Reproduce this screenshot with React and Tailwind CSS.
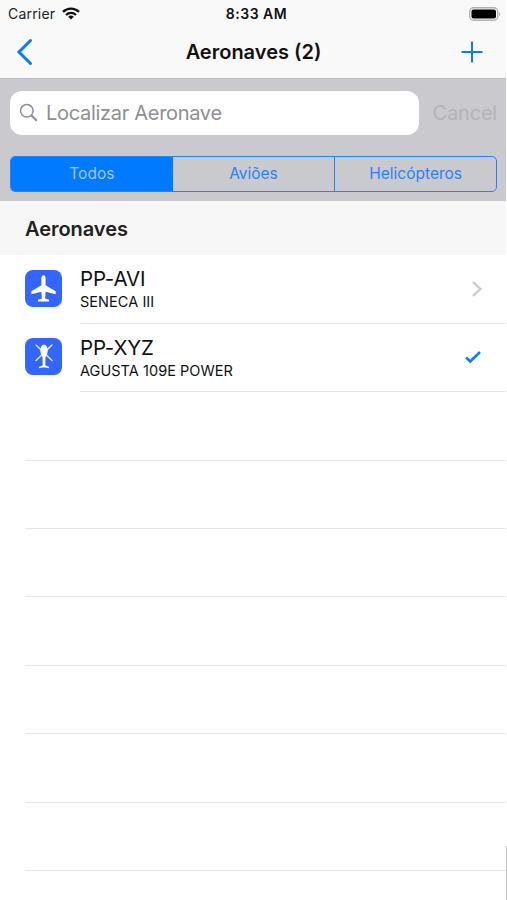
import { useState } from "react";

const aircraft = [
  { id: "PP-AVI", model: "SENECA III", kind: "plane", selected: false },
  { id: "PP-XYZ", model: "AGUSTA 109E POWER", kind: "helicopter", selected: true },
];

const emptyRows = [1, 2, 3, 4, 5, 6, 7];

function PlaneIcon() {
  return (
    <svg viewBox="0 0 37 37" className="size-[37px]" fill="#fff">
      <path d="M18.5 5.3c-1.5 0-2.1 1.4-2.1 3v6.9L6.3 21.3v2.9l10.1-2.4.5 6.7-3.9 1.3v1.7h11v-1.7l-3.9-1.3.5-6.7 10.1 2.4v-2.9l-10.1-6.1V8.3c0-1.6-.6-3-2.1-3z" />
    </svg>
  );
}

function HelicopterIcon() {
  return (
    <svg viewBox="0 0 37 37" className="size-[37px]" fill="#fff">
      <path
        d="M11 7l16 15.5M27 7L11 22.5"
        stroke="#dbe5ff"
        strokeWidth="1.6"
        strokeLinecap="round"
      />
      <ellipse cx="19" cy="12.6" rx="3.7" ry="6.2" />
      <path d="M16.8 16.5h4.4l-.8 4v7l3.9 1.6-.4 1.2-3.2-.9h-3.4l-3.2.9-.4-1.2 3.9-1.6v-7z" />
    </svg>
  );
}

function Row({ item }) {
  return (
    <li className="flex h-[68.4px] pl-[25px]">
      <div className="mt-[14.4px] size-[37px] shrink-0 overflow-hidden rounded-[8px] bg-[#3366ff]">
        {item.kind === "plane" ? <PlaneIcon /> : <HelicopterIcon />}
      </div>
      <div className="ml-[18px] flex flex-1 items-center justify-between border-b border-[#e6e6e8]">
        <div className="pt-[1.5px] text-[#111]">
          <p className="text-[20.5px] leading-[24px] tracking-[-0.2px]">{item.id}</p>
          <p className="text-[14.5px] leading-[21px] tracking-[0.05px]">{item.model}</p>
        </div>
        {item.selected ? (
          <svg viewBox="0 0 18 14" className="mr-[24px] h-[14px] w-[18px]" fill="none">
            <path d="M2 7.5l4.2 4L16 2" stroke="#0a7aff" strokeWidth="2.5" />
          </svg>
        ) : (
          <svg viewBox="0 0 12 18" className="mr-[23px] h-[18px] w-[12px]" fill="none">
            <path d="M2 2l7.5 7L2 16" stroke="#c7c7cc" strokeWidth="2.2" />
          </svg>
        )}
      </div>
    </li>
  );
}

function App() {
  const [filter, setFilter] = useState("Todos");

  return (
    <main className="relative h-[900px] w-[507px] overflow-hidden bg-white pr-px font-['Inter',sans-serif]">
      {/* Status bar */}
      <div className="grid h-[27px] grid-cols-3 items-center bg-[#f9f9f9] pr-[5px] pl-[8px] text-[14px] text-[#222]">
        <div className="flex items-center gap-[7px]">
          <span className="tracking-[0.2px]">Carrier</span>
          <svg viewBox="0 0 18 13" className="h-[13px] w-[18px]" fill="none" stroke="#111">
            <path d="M1 4.9a11.3 11.3 0 0 1 16 0" strokeWidth="2.4" />
            <path d="M4 8a7.1 7.1 0 0 1 10 0" strokeWidth="2.2" />
            <path d="M9 12.6L6.2 9.8a4 4 0 0 1 5.6 0z" fill="#111" stroke="none" />
          </svg>
        </div>
        <span className="pl-[4px] text-center font-semibold tracking-[0.5px] text-[#111]">8:33 AM</span>
        <svg viewBox="0 0 32 14" className="h-[14px] w-[32px] justify-self-end">
          <rect x=".75" y=".75" width="28" height="12.5" rx="3.8" fill="none" stroke="#b0b0b0" strokeWidth="1.3" />
          <rect x="2.5" y="2.5" width="24.5" height="9" rx="2" fill="#000" />
          <path d="M30 5v4c1.7-.6 1.7-3.4 0-4z" fill="#b0b0b0" />
        </svg>
      </div>

      {/* Navigation bar */}
      <header className="flex h-[52px] items-center justify-between border-b border-[#bcbcc0] bg-[#f9f9f9] pr-[22px] pb-px pl-[15px]">
        <button className="flex w-[32px]">
          <svg viewBox="0 0 20 28" className="h-[28px] w-[20px]" fill="none">
            <path d="M15.5 2.5L4 14l11.5 11.5" stroke="#0a7aff" strokeWidth="3" strokeLinecap="round" />
          </svg>
        </button>
        <h1 className="text-[20px] font-semibold text-[#111]">Aeronaves (2)</h1>
        <button>
          <svg viewBox="0 0 24 24" className="size-[24px]">
            <path d="M12 1.5v21M1.5 12h21" stroke="#0a7aff" strokeWidth="2" />
          </svg>
        </button>
      </header>

      {/* Search and filter */}
      <section className="h-[122px] bg-[#c9c9ce] pt-[12px] pr-[9px] pl-[10px]">
        <div className="flex items-center">
          <div className="flex h-[44px] w-[409px] items-center rounded-[12px] bg-white pl-[9px] text-[#8e8e93]">
            <svg viewBox="0 0 20 20" className="size-[20px]" fill="none" stroke="#8e8e93">
              <circle cx="7.8" cy="7.8" r="6.3" strokeWidth="1.5" />
              <path d="M12.3 12.3l5.5 5.5" strokeWidth="2" />
            </svg>
            <span className="ml-[7px] text-[20px] tracking-[-0.3px]">Localizar Aeronave</span>
          </div>
          <button className="ml-[14px] text-[20px] tracking-[-0.2px] text-[#b3b3b8]">Cancel</button>
        </div>
        <div className="mt-[20.5px] grid h-[36px] grid-cols-3 overflow-hidden rounded-[5px] border border-[#2484f5] text-[15.5px] tracking-[0px]">
          {["Todos", "Aviões", "Helicópteros"].map((name) => (
            <button
              key={name}
              onClick={() => setFilter(name)}
              className={
                filter === name
                  ? "bg-[#007aff] pt-px text-[#a3c8f3]"
                  : "border-[#2484f5] pt-px text-[#2484f5] last:border-l"
              }
            >
              {name}
            </button>
          ))}
        </div>
      </section>

      {/* Aircraft list */}
      <h2 className="flex h-[54.4px] items-center bg-[#f7f7f7] pt-[2px] pl-[25px] text-[20px] font-semibold tracking-[-0.05px] text-[#222]">
        Aeronaves
      </h2>
      <ul>
        {aircraft.map((item) => (
          <Row key={item.id} item={item} />
        ))}
        {emptyRows.map((n) => (
          <li key={n} className="ml-[25px] h-[68.4px] border-b border-[#e6e6e8]" />
        ))}
      </ul>

      <div className="absolute right-0 bottom-0 h-[54px] w-px bg-[#c4c4c6]" />
    </main>
  );
}

export default App;
